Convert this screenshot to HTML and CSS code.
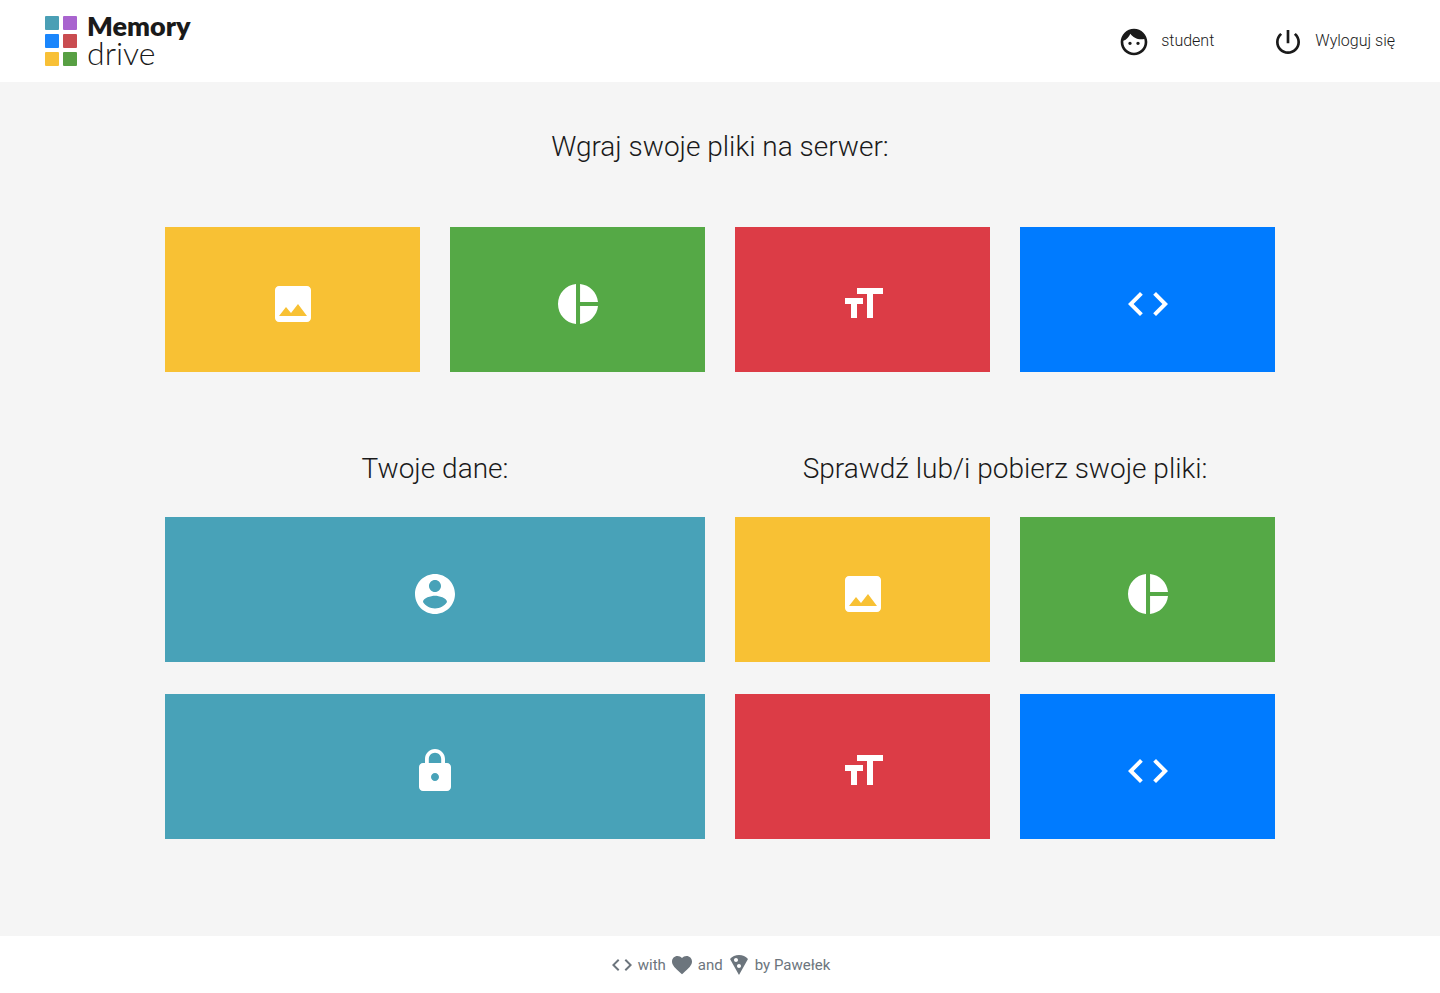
FILE: index.html
```
<!DOCTYPE html>
<html lang="pl">
<head>
<meta charset="utf-8">
<meta name="viewport" content="width=device-width, initial-scale=1">
<title>Memory drive</title>
<link rel="stylesheet" href="styles.css">
</head>
<body>
<svg class="sprite" aria-hidden="true">
  <symbol id="i-image" viewBox="0 0 24 24"><path d="M21 19V5c0-1.1-.9-2-2-2H5c-1.1 0-2 .9-2 2v14c0 1.1.9 2 2 2h14c1.1 0 2-.9 2-2zM8.5 13.5l2.5 3.01L14.5 12l4.5 6H5l3.5-4.5z"/></symbol>
  <symbol id="i-pie" viewBox="0 0 24 24"><path d="M11 2v20c-5.07-.5-9-4.79-9-10s3.930-9.500 9-10zm2.030 0v8.990H22c-.47-4.740-4.240-8.520-8.970-8.990zm0 11.010V22c4.740-.47 8.500-4.250 8.970-8.990h-8.970z"/></symbol>
  <symbol id="i-text" viewBox="0 0 24 24"><path d="M9 4v3h5v12h3V7h5V4H9zm-6 8h3v7h3v-7h3V9H3v3z"/></symbol>
  <symbol id="i-code" viewBox="0 0 24 24"><path d="M9.4 16.6L4.8 12l4.6-4.6L8 6l-6 6 6 6 1.4-1.4zm5.200 0l4.600-4.600-4.600-4.600L16 6l6 6-6 6-1.400-1.400z"/></symbol>
  <symbol id="i-account" viewBox="0 0 24 24"><path d="M12 2C6.480 2 2 6.480 2 12s4.480 10 10 10 10-4.480 10-10S17.520 2 12 2zm0 3c1.660 0 3 1.340 3 3s-1.340 3-3 3-3-1.340-3-3 1.340-3 3-3zm0 14.200c-2.500 0-4.710-1.280-6-3.220.03-1.990 4-3.080 6-3.080 1.990 0 5.970 1.090 6 3.080-1.290 1.940-3.500 3.220-6 3.220z"/></symbol>
  <symbol id="i-lock" viewBox="0 0 24 24"><path d="M18 8h-1V6c0-2.760-2.240-5-5-5S7 3.240 7 6v2H6c-1.100 0-2 .9-2 2v10c0 1.100.9 2 2 2h12c1.100 0 2-.9 2-2V10c0-1.100-.9-2-2-2zm-6 9c-1.100 0-2-.9-2-2s.9-2 2-2 2 .9 2 2-.9 2-2 2zm3.100-9H8.900V6c0-1.710 1.390-3.100 3.100-3.100 1.710 0 3.100 1.390 3.100 3.100v2z"/></symbol>
  <symbol id="i-face" viewBox="0 0 24 24"><path d="M9 11.750c-.69 0-1.250.56-1.250 1.250s.56 1.250 1.250 1.250 1.250-.56 1.250-1.250-.56-1.250-1.250-1.250zm6 0c-.69 0-1.250.56-1.250 1.250s.56 1.250 1.250 1.250 1.250-.56 1.250-1.250-.56-1.250-1.250-1.250zM12 2C6.480 2 2 6.480 2 12s4.480 10 10 10 10-4.480 10-10S17.520 2 12 2zm0 18c-4.410 0-8-3.590-8-8 0-.29.02-.58.05-.86 2.360-1.050 4.230-2.980 5.210-5.370C11.070 8.330 14.050 10 17.420 10c.78 0 1.530-.09 2.250-.26.21.71.33 1.470.33 2.260 0 4.410-3.590 8-8 8z"/></symbol>
  <symbol id="i-power" viewBox="0 0 24 24"><path d="M13 3h-2v10h2V3zm4.830 2.170l-1.420 1.420C17.990 7.860 19 9.810 19 12c0 3.870-3.130 7-7 7s-7-3.130-7-7c0-2.190 1.010-4.140 2.580-5.420L6.170 5.170C4.230 6.820 3 9.260 3 12c0 4.970 4.030 9 9 9s9-4.030 9-9c0-2.740-1.230-5.180-3.170-6.830z"/></symbol>
  <symbol id="i-heart" viewBox="0 0 24 24"><path d="M12 21.350l-1.450-1.320C5.400 15.360 2 12.280 2 8.500 2 5.420 4.420 3 7.500 3c1.740 0 3.410.81 4.500 2.090C13.090 3.810 14.760 3 16.500 3 19.580 3 22 5.420 22 8.500c0 3.780-3.400 6.860-8.550 11.540L12 21.350z"/></symbol>
  <symbol id="i-pizza" viewBox="0 0 24 24"><path d="M12 2C8.430 2 5.230 3.540 3.010 6L12 22l8.990-16C18.780 3.550 15.570 2 12 2zM7 7c0-1.100.9-2 2-2s2 .9 2 2-.9 2-2 2-2-.9-2-2zm5 8c-1.100 0-2-.9-2-2s.9-2 2-2 2 .9 2 2-.9 2-2 2z"/></symbol>
</svg>

<header class="navbar">
  <a class="logo" href="#">
    <svg class="logo-mark" viewBox="0 0 32 50" aria-hidden="true">
      <rect width="14" height="14" rx="1" fill="#4a9fb5"/>
      <rect x="18" width="14" height="14" rx="1" fill="#a964cf"/>
      <rect y="18" width="14" height="14" rx="1" fill="#1a86fc"/>
      <rect x="18" y="18" width="14" height="14" rx="1" fill="#c94c50"/>
      <rect y="36" width="14" height="14" rx="1" fill="#f8c036"/>
      <rect x="18" y="36" width="14" height="14" rx="1" fill="#579f43"/>
    </svg>
    <span class="logo-text"><span class="logo-bold">Memory</span><span class="logo-light">drive</span></span>
  </a>
  <nav class="nav">
    <a class="nav-link" href="#"><svg class="nav-icon" aria-hidden="true"><use href="#i-face"/></svg><span>student</span></a>
    <a class="nav-link" href="#"><svg class="nav-icon" aria-hidden="true"><use href="#i-power"/></svg><span>Wyloguj się</span></a>
  </nav>
</header>

<main class="main">
  <div class="container">
    <section class="upload">
      <h1 class="heading">Wgraj swoje pliki na serwer:</h1>
      <div class="tiles tiles-four">
        <a class="tile yellow" href="#" aria-label="Wgraj zdjęcia"><svg class="tile-icon"><use href="#i-image"/></svg></a>
        <a class="tile green" href="#" aria-label="Wgraj prezentacje"><svg class="tile-icon"><use href="#i-pie"/></svg></a>
        <a class="tile red" href="#" aria-label="Wgraj teksty"><svg class="tile-icon"><use href="#i-text"/></svg></a>
        <a class="tile blue" href="#" aria-label="Wgraj kod"><svg class="tile-icon"><use href="#i-code"/></svg></a>
      </div>
    </section>
    <div class="columns">
      <section>
        <h2 class="heading">Twoje dane:</h2>
        <div class="tiles">
          <a class="tile teal" href="#" aria-label="Profil"><svg class="tile-icon"><use href="#i-account"/></svg></a>
          <a class="tile teal" href="#" aria-label="Hasło"><svg class="tile-icon"><use href="#i-lock"/></svg></a>
        </div>
      </section>
      <section>
        <h2 class="heading">Sprawdź lub/i pobierz swoje pliki:</h2>
        <div class="tiles tiles-two">
          <a class="tile yellow" href="#" aria-label="Zdjęcia"><svg class="tile-icon"><use href="#i-image"/></svg></a>
          <a class="tile green" href="#" aria-label="Prezentacje"><svg class="tile-icon"><use href="#i-pie"/></svg></a>
          <a class="tile red" href="#" aria-label="Teksty"><svg class="tile-icon"><use href="#i-text"/></svg></a>
          <a class="tile blue" href="#" aria-label="Kod"><svg class="tile-icon"><use href="#i-code"/></svg></a>
        </div>
      </section>
    </div>
  </div>
</main>

<footer class="footer">
  <svg class="footer-icon" aria-hidden="true"><use href="#i-code"/></svg>
  <span>with</span>
  <svg class="footer-icon" aria-hidden="true"><use href="#i-heart"/></svg>
  <span>and</span>
  <svg class="footer-icon" aria-hidden="true"><use href="#i-pizza"/></svg>
  <span>by Pawełek</span>
</footer>
</body>
</html>
```
FILE: styles.css
```
* { box-sizing: border-box; }

body {
  margin: 0;
  min-height: 100vh;
  display: flex;
  flex-direction: column;
  background: #fff;
  color: #1a1a1a;
  font: 300 16px/24px Roboto, sans-serif;
}

a { color: inherit; text-decoration: none; }

svg { display: block; fill: currentColor; }

.sprite { display: none; }

.navbar {
  display: flex;
  justify-content: space-between;
  align-items: center;
  padding: 16px 45px;
}

.logo { display: flex; gap: 10px; }

.logo-mark { width: 32px; height: 50px; }

.logo-text {
  display: flex;
  flex-direction: column;
  height: 50px;
  font-family: Lato, sans-serif;
}

.logo-bold {
  font-size: 27px;
  font-weight: 800;
  line-height: 20px;
}

.logo-light {
  font-size: 32px;
  font-weight: 300;
  line-height: 34px;
}

.nav { display: flex; gap: 58px; }

.nav-link { display: flex; align-items: center; gap: 11px; }

.nav-icon { width: 32px; height: 32px; margin-top: 2px; }

.main {
  flex: 1;
  background: #f5f5f5;
  padding: 48px 15px 96px;
}

.container { max-width: 1110px; margin: 0 auto; }

.heading {
  margin: 0;
  font-size: 28px;
  font-weight: 300;
  line-height: 34px;
  text-align: center;
}

.tiles { display: grid; gap: 32px 30px; }

.tiles-two { grid-template-columns: repeat(2, 1fr); }

.tiles-four { grid-template-columns: repeat(4, 1fr); }

.upload .tiles { margin-top: 63px; }

.columns {
  display: grid;
  grid-template-columns: repeat(2, 1fr);
  gap: 30px;
  margin-top: 80px;
}

.columns .tiles { margin-top: 31px; }

.tile {
  display: flex;
  justify-content: center;
  padding: 53px 0 44px;
  color: #fff;
}

.tile-icon { width: 48px; height: 48px; }

.yellow { background: #f8c134; }
.green { background: #55a946; }
.red { background: #dc3c46; }
.blue { background: #007bff; }
.teal { background: #48a2b8; }

.footer {
  display: flex;
  justify-content: center;
  align-items: center;
  gap: 4px;
  padding: 17px 16px 16px;
  color: #6c757d;
  font-size: 15px;
  font-weight: 400;
}

.footer-icon { width: 24px; height: 24px; }
```
